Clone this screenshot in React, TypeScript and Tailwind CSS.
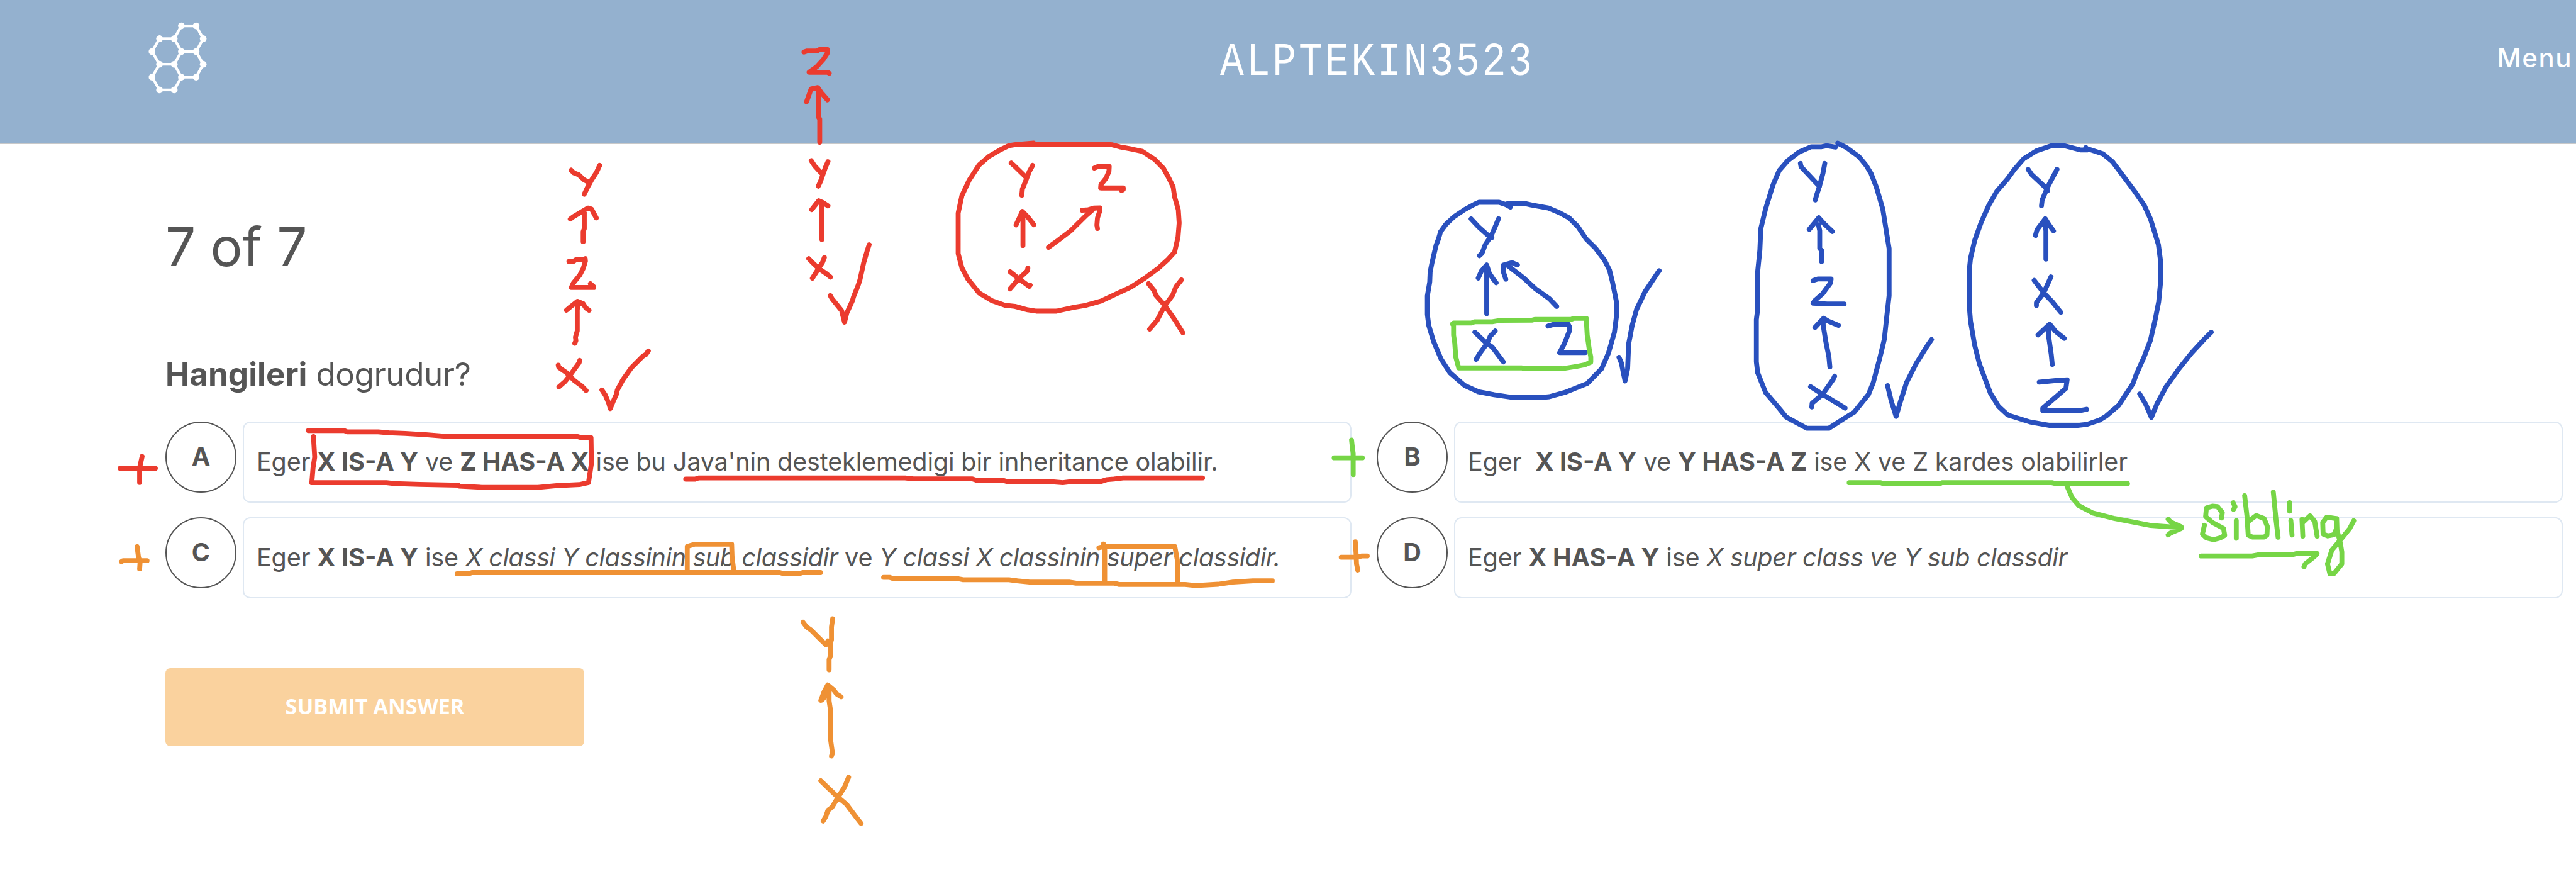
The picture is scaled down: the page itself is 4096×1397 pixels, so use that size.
import type { ReactNode } from "react";

const RED = "#eb3b2e";
const ORANGE = "#ef9134";
const GREEN = "#76d546";
const BLUE = "#2950be";

type Sketch = { transform: string; color: string; d: string };

const sketches: Sketch[] = [
  {
    transform: "translate(900 240) scale(0.38265 0.33333)",
    color: RED,
    d: `M172 143L183 156L205 166L228 191L245 202L256 200 M298 119L284 154L262 193L243 233L230 265
      M225 505L225 455L230 440L230 350 M168 391L182 379L246 335L262 340L274 366L283 385
      M162 606L182 606L192 598L222 598L234 592L235 605L225 642L211 674L182 715L173 738L272 738L271 733L257 719
      M188 1021L193 1008L191 990L199 958L199 850L205 815 M151 853L170 835L200 808L225 820L237 842L251 853
      M115 1132L117 1143L150 1169L188 1212L220 1239L238 1261 M210 1108L207 1120L188 1150L165 1187L145 1215L118 1242
      M308 1258L323 1284L338 1325L345 1352L360 1310L372 1280L376 1258L400 1207L438 1145L490 1085L502 1078L513 1060
      M1233 95L1248 121L1276 156L1284 165 M1307 100L1296 128L1283 170L1274 200L1264 224
      M1280 494V315 M1235 343L1266 298L1286 308L1307 324
      M1222 592L1240 613L1266 642L1300 668L1318 685 M1291 586L1283 610L1258 655L1238 691
      M1317 779L1325 795L1367 855L1380 914L1390 868L1415 805L1420 785L1440 728L1448 700L1465 612L1480 553L1489 521`,
  },
  {
    transform: "translate(1280 20) scale(0.48469 0.3699)",
    color: RED,
    d: `M164 184L175 179L210 179L217 173L246 173L245 190L232 217L208 252L182 276L247 276L252 281
      M219 596L219 490L214 480L214 365 M173 411L189 352L212 346L225 370L246 402
      M965 600L905 606L880 611L850 630L810 660L775 700L740 770L715 840L702 920L702 1105L715 1170L735 1220L775 1285L820 1320L865 1341L900 1346L945 1362L975 1368L1045 1368L1100 1352L1145 1342L1200 1322L1305 1258L1350 1220L1400 1172L1435 1130L1457 1098L1469 1030L1473 965L1470 905L1457 845L1452 800L1437 760L1418 715L1388 675L1345 638L1310 628L1265 617L1240 608L1210 605L905 605
      M887 691L899 705L935 751L941 760 M962 702L950 730L939 768L926 810L924 838
      M928 1068V930 M904 974L926 912L945 938L966 973
      M883 1188L912 1218L950 1255L953 1249 M945 1172L943 1184L912 1222L883 1266
      M1177 714L1190 707L1229 707L1228 730L1217 762L1200 790L1199 805L1278 805L1278 812L1272 817
      M1017 1076L1050 1045L1095 1000L1145 935L1175 900 M1135 907L1155 905L1175 897L1197 896L1196 910L1188 942L1186 975L1188 990
      M1366 1242L1385 1273L1392 1296L1422 1340L1458 1408L1486 1467 M1481 1225L1462 1256L1450 1295L1422 1345L1396 1410L1370 1450`,
  },
  {
    transform: "translate(180 480) scale(0.70153 0.35714)",
    color: RED,
    d: `M33 873H118 M86 817L80 870L80 940
      M487 694H573L580 700H655L680 705L720 708L770 714L822 722H1135L1145 728H1168L1169 850L1162 940L1140 950L1085 955L1040 963H905L850 957L848 953L755 949L695 945L675 941H495L498 870L502 820L499 723`,
  },
  {
    transform: "translate(180 480) scale(0.70153 0.35714)",
    color: ORANGE,
    d: `M36 1315L40 1310H98 M74 1244L77 1290L81 1320L80 1349
      M1400 1360V1243L1418 1232H1507L1508 1290L1512 1355`,
  },
  {
    transform: "translate(1250 560) scale(0.70153 0.33333)",
    color: RED,
    d: "M-129 750H-106L-98 744H400L420 749H562L572 756H635L645 762H745L780 768L805 762H872L885 753L903 750L925 744H1117",
  },
  {
    transform: "translate(1250 560) scale(0.70153 0.33333)",
    color: ORANGE,
    d: `M-680 1230H-652L-644 1224H98L108 1230H143L153 1224H196
      M348 1248H362L370 1254H525L540 1260H650L670 1266L700 1272H795L812 1278H905L915 1284H1075L1100 1290L1155 1283L1190 1272L1238 1266H1285
      M867 1098L880 1092H1050L1056 1160L1057 1275 M878 1079L881 1110V1275
      M1451 1146H1490L1500 1140H1514 M1485 1068L1487 1130L1488 1180L1491 1211`,
  },
  {
    transform: "translate(1250 560) scale(0.70153 0.33333)",
    color: GREEN,
    d: "M1434 642H1502 M1476 552L1478 590L1480 620V727",
  },
  {
    transform: "translate(2380 320) scale(0.33333)",
    color: BLUE,
    d: `M522 90L500 78L465 66H362L340 76L290 103L235 140L195 178L168 215L158 250L145 285L125 370L115 420L113 470L101 540V635L108 690L132 770L170 860L215 930L290 995L360 1027L440 1042L535 1056H680L720 1052L800 1030L912 985L985 910L1020 830L1050 725L1062 630V580L1040 470L1025 410L1000 360L955 300L905 250L865 190L820 145L770 118L715 95L630 80L595 72H510
      M323 150L360 190L410 235L428 245 M462 149L445 190L425 235L395 280L378 325L365 337
      M402 630V390 M359 450L375 415L402 384L415 425L435 455L450 474
      M757 594L720 555L650 505L590 450L545 415L510 388 M499 456L487 420L487 384L530 372L558 384
      M342 725L400 780L430 800L486 875 M445 719L420 745L405 780L365 835L348 863
      M713 694L745 684L815 684L822 697L821 720L795 785L772 828H902
      M1073 852L1085 880L1095 930L1104 972L1117 910L1122 785L1140 690L1162 610L1205 520L1265 430L1277 413`,
  },
  {
    transform: "translate(2380 320) scale(0.33333)",
    color: GREEN,
    d: "M228 683L235 678H325L340 672H430L470 665L630 664L645 660H830L845 654H907L912 740L922 810L930 850V877L900 890L860 898L785 910H590L580 906H260L245 850L240 780L234 740V680",
  },
  {
    transform: "translate(2940 220) scale(0.53571 0.33333)",
    color: BLUE,
    d: `M306 86L278 79L260 85H228L190 112L155 155L128 205L108 280L85 400L70 500L67 610L60 720V910L56 960V1175L60 1230L85 1330L130 1415L150 1455L215 1512H285L330 1465L365 1430L410 1340L425 1280L445 1160L460 1060L468 940L475 840V600L468 530L455 400L435 290L418 220L403 180L380 135L340 88L313 66
      M195 169L197 185L246 270L255 285 M272 169L266 220L255 285L246 330L242 354
      M262 666V610L256 600V510L252 480 M223 503L253 444L270 475L296 514
      M235 763L250 755H292L290 775L265 830L240 865L235 878L280 882H333
      M288 1201L285 1150L275 1070L267 990V960 M241 1001L268 954L285 970L315 990
      M227 1301L265 1340L336 1410 M303 1248L298 1265L265 1340L232 1385L231 1404
      M470 1296L482 1375L497 1452L510 1380L530 1280L560 1185L595 1095L609 1062
      M1096 88L1100 101H1080L1025 78H990L940 105L900 145L870 200L850 245L815 310L790 380L765 470L745 560L732 650L728 710V890L732 970L745 1090L760 1185L795 1335L820 1400L850 1445L920 1480L990 1500H1060L1100 1492L1140 1470L1160 1450L1200 1395L1245 1285L1255 1240L1280 1150L1300 1065L1315 960L1326 870L1332 770V665L1325 580L1300 450L1280 380L1250 310L1215 235L1180 160L1150 120L1096 92
      M914 199L925 225L968 290L975 308 M1005 199L975 290L958 355L956 384
      M970 654V510L966 470 M937 534L942 505L968 449L980 480L994 511
      M933 762L963 825L990 870L1017 924 M986 744L963 825L940 875V889
      M990 1188L987 1140L979 1050V1000 M945 1039L982 984L1000 1020L1028 1056
      M949 1278L1000 1270L1037 1266L1033 1310L960 1410L960 1422H1080L1098 1416
      M1266 1338L1285 1390L1303 1457L1320 1390L1350 1300L1390 1210L1430 1130L1470 1060L1492 1025`,
  },
  {
    transform: "translate(3300 680) scale(0.67347 0.33333)",
    color: GREEN,
    d: `M-257 408H-178L-170 414H-30L-24 408H252L262 413H442
      M290 425L303 485L320 525L355 562L410 590L500 625L577 636 M544 594L550 607L577 632L577 640L550 663L544 673
      M678 587L680 560L668 529L655 527L640 536L638 580L655 610L683 640L686 675L675 688L658 697L640 688L630 669L635 624
      M715 600V690 M707 510L712 530L708 544
      M736 474L742 580L745 674L755 684H785L792 674L793 630L785 590L765 575L745 605
      M808 456L815 600L820 685
      M852 600L855 674 M849 509V552
      M880 594L882 679 M882 610L900 576L912 605L918 679
      M965 590L942 583L932 610L933 669L945 678L960 672L967 640V590
      M967 590L968 650L976 710L980 760V820L960 870H950L944 820L955 750L976 700L1000 640L1010 601
      M627 780H755L770 774H855L865 768H918L910 785L888 820L885 834`,
  },
  {
    transform: "translate(1300 1020) scale(0.33333)",
    color: ORANGE,
    d: `M174 96L192 120L215 136L257 178L290 210L300 190 M324 78L318 120V185L312 205V268L306 285V337
      M318 774L323 760L312 680V535L306 495V435 M264 492L280 450L299 414L330 440L345 460L367 474 M270 490L306 450
      M264 900L300 935L345 978L395 1020L440 1080L468 1116 M405 882L385 930L355 978L320 1035L300 1050L290 1080L276 1104`,
  },
];

function Annotations() {
  return (
    <svg
      className="pointer-events-none absolute inset-0 h-[1397px] w-[4096px]"
      viewBox="0 0 4356 1486"
      preserveAspectRatio="none"
      fill="none"
      strokeWidth={7.8}
      strokeLinecap="round"
      strokeLinejoin="round"
    >
      {sketches.map((s, i) => (
        <path key={i} transform={s.transform} stroke={s.color} d={s.d} vectorEffect="non-scaling-stroke" />
      ))}
    </svg>
  );
}

const xs = [257, 269.7, 294.7, 306.8, 331.8, 343.8];
const ys = [43.7, 65.4, 87.2, 108.8, 130.6, 152.3];
const atoms: [number, number][] = [
  [3, 0], [4, 0], [1, 1], [2, 1], [5, 1], [0, 2], [3, 2], [4, 2],
  [1, 3], [2, 3], [5, 3], [0, 4], [3, 4], [4, 4], [1, 5], [2, 5],
];
const bonds: [number, number][] = [
  [0, 1], [0, 3], [1, 4], [2, 3], [2, 5], [3, 6], [4, 7], [6, 7], [5, 8], [6, 9],
  [7, 10], [8, 9], [8, 11], [9, 12], [10, 13], [12, 13], [11, 14], [12, 15], [14, 15],
];

function Logo() {
  return (
    <svg className="h-[120px] w-[96px]" viewBox="250 34 102 128" fill="white" stroke="white" strokeWidth={4.6}>
      {bonds.map(([a, b], i) => (
        <line key={i} x1={xs[atoms[a][0]]} y1={ys[atoms[a][1]]} x2={xs[atoms[b][0]]} y2={ys[atoms[b][1]]} />
      ))}
      {atoms.map(([x, y], i) => (
        <circle key={i} cx={xs[x]} cy={ys[y]} r={5.7} stroke="none" />
      ))}
    </svg>
  );
}

function B({ children }: { children: ReactNode }) {
  return <b className="font-bold tracking-normal">{children}</b>;
}

function Option({ letter, children }: { letter: string; children: ReactNode }) {
  return (
    <div className="flex items-start gap-[10px]">
      <div className="flex h-[113px] w-[113px] shrink-0 items-center justify-center rounded-full border-2 border-[#555] text-[39.6px] font-bold leading-none">
        {letter}
      </div>
      <div className="flex h-[129px] w-[1763px] items-center rounded-xl border-2 border-[#dfe8f2] pl-[20px] text-[39.6px] leading-none">
        <p className="whitespace-pre tracking-[-0.17px]">{children}</p>
      </div>
    </div>
  );
}

export default function App() {
  return (
    <div className="relative h-[1397px] w-[4096px] overflow-hidden bg-white font-['Inter',sans-serif] text-[#555]">
      <header className="flex h-[229px] items-start border-b-2 border-[#c9c9c9] bg-[#94b1cf] text-white">
        <div className="w-[1940px] shrink-0 pl-[235px] pt-[32px]">
          <Logo />
        </div>
        <h1 className="w-[542px] shrink-0 origin-left scale-x-85 whitespace-nowrap pt-[59px] font-['Liberation_Mono',monospace] text-[74.2px] leading-[80px] tracking-[4.5px]">
          ALPTEKIN3523
        </h1>
        <nav className="ml-auto pr-[6px] pt-[64px] text-[42px] font-medium leading-[56px] tracking-[1.5px]">Menu</nav>
      </header>
      <main className="pl-[263px]">
        <p className="pt-[113px] text-[85.4px] leading-[100px] tracking-[-0.4px]">7 of 7</p>
        <h2 className="mt-[112px] text-[51.2px] leading-[80px] tracking-[-0.45px]">
          <B>Hangileri</B> dogrudur?
        </h2>
        <section className="mt-[36px] grid grid-cols-[1886px_1886px] gap-x-[40px] gap-y-[23px]">
          <Option letter="A">Eger <B>X IS-A Y</B> ve <B>Z HAS-A X</B> ise bu Java'nin desteklemedigi bir inheritance olabilir.</Option>
          <Option letter="B">Eger{"  "}<B>X IS-A Y</B> ve <B>Y HAS-A Z</B> ise X ve Z kardes olabilirler</Option>
          <Option letter="C">Eger <B>X IS-A Y</B> ise <i className="tracking-[-0.43px]">X classi Y classinin sub classidir</i> ve <i className="tracking-[-0.43px]">Y classi X classinin super classidir.</i></Option>
          <Option letter="D">Eger <B>X HAS-A Y</B> ise <i className="tracking-[-0.36px]">X super class ve Y sub classdir</i></Option>
        </section>
        <button className="mt-[111px] flex h-[124px] w-[666px] items-center justify-center rounded-lg bg-[#fad29e] pb-1 font-['Open_Sans',sans-serif] text-[34.2px] font-bold leading-none text-white">SUBMIT ANSWER</button>
      </main>
      <Annotations />
    </div>
  );
}
